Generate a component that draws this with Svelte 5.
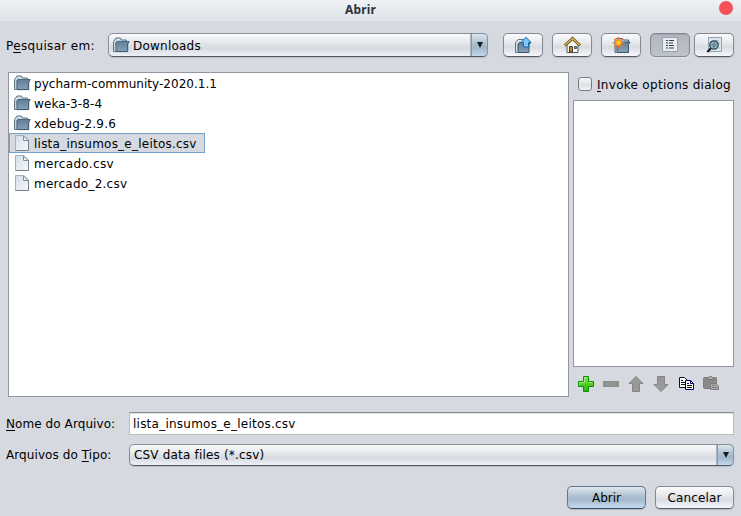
<script>
  const files = [
    { name: 'pycharm-community-2020.1.1', dir: true, spacing: 0.03 },
    { name: 'weka-3-8-4', dir: true, spacing: 0.1 },
    { name: 'xdebug-2.9.6', dir: true, spacing: 0.18 },
    { name: 'lista_insumos_e_leitos.csv', spacing: 0.235 },
    { name: 'mercado.csv', spacing: 0.34 },
    { name: 'mercado_2.csv', spacing: 0.25 }
  ];
  let selected = $state(3);
  let invoke = $state(false);
</script>

{#snippet folder()}
  <svg width="17" height="16" viewBox="0 0 17 16">
    <path d="M2.500 14.500h-2v-10l2.500-3.500h4.500l1 2h5v3" fill="#c3d1dc" stroke="#5d758a" />
    <path d="M1.500 5.500L4 2.500h3" fill="none" stroke="#e3ebf1" />
    <path d="M2.500 15V5.500L4 4h12.500l-1.500 2.500V15z" fill="url(#blue)" />
    <path d="M3 14V5.500L4.500 4.500h11.500" fill="none" stroke="#486379" stroke-width=".8" />
    <path d="M2.500 14.600h12.200V7l1.500-2.500" fill="none" stroke="#3b566c" />
  </svg>
{/snippet}

{#snippet page()}
  <svg width="17" height="16" viewBox="0 0 17 16">
    <path d="M1.500.5h8.500l4.500 4.500v10.500h-13z" fill="url(#paper)" stroke="#a7b1bb" />
    <path d="M1.500 15.500h13V5" fill="none" stroke="#77818b" />
    <path d="M9.500 1v4.500H14z" fill="#fff" stroke="#7891a9" />
  </svg>
{/snippet}

<svg class="defs" width="0" height="0">
  <defs>
    <linearGradient id="blue" x2="0" y2="1"><stop stop-color="#5f7d95" /><stop offset="1" stop-color="#87a2b8" /></linearGradient>
    <linearGradient id="paper" x2="1" y2="1"><stop stop-color="#d4dfe9" /><stop offset="1" stop-color="#f5f8fb" /></linearGradient>
    <linearGradient id="green" x2="0" y2="1"><stop stop-color="#8be04b" /><stop offset="1" stop-color="#20b600" /></linearGradient>
  </defs>
</svg>

<div class="dialog">
  <header><span>Abrir</span><i class="close"></i></header>

  <div class="top">
    <label class="look" for="look">P<u>e</u>squisar em:</label>
    <div class="combo" id="look">
      {@render folder()}<span class="value dl">Downloads</span><span class="arrow"></span>
    </div>
    <div class="tools">
      <button aria-label="Up">
        <svg width="18" height="18" viewBox="0 0 18 18">
          <path d="M3.500 16.500h-2V6.500l2.500-3h5.500v3" fill="#d3dfe8" stroke="#5d758a" />
          <path d="M4 16.500V8L5.500 6.500h11l-1.500 2.500v7.500z" fill="url(#blue)" stroke="#3b566c" />
          <path d="M12 1.200l5 5.300h-2.500V11h-5V6.500H7z" fill="#7fc6fa" stroke="#176dae" />
        </svg>
      </button>
      <button aria-label="Home">
        <svg width="18" height="18" viewBox="0 0 18 18">
          <path d="M4 8.500v8h11v-8L9.500 3.500z" fill="#f8f7f3" stroke="#57564f" />
          <path d="M1.800 9.500L9.500 2.500l7.500 7" fill="none" stroke="#594318" stroke-width="3" />
          <path d="M2 9.300L9.500 2.500l7.300 6.800" fill="none" stroke="#dfb64b" stroke-width="1.500" />
          <path d="M6.500 16v-5.500h3V16z" fill="#b68b42" stroke="#4e3b19" />
          <path d="M11.500 10.500h2v2h-2z" fill="#6b98bf" stroke="#31567a" />
        </svg>
      </button>
      <button aria-label="New folder">
        <svg width="19" height="18" viewBox="0 0 19 18">
          <path d="M4.500 16.500h-1.500v-12l1.500-2h6l1 1.500h5v4" fill="#c3d1dc" stroke="#486379" />
          <path d="M5 16.500v-9l1.500-1.500h11.500l-1.500 2.500v8z" fill="url(#blue)" stroke="#3b566c" />
          <path d="M6.500 1v11.500M.8 6.700h11.500M2.500 2.700l8 8M10.500 2.700l-8 8" stroke="#f9772a" stroke-width="1.400" />
          <circle cx="6.500" cy="6.700" r="3" fill="#ff9b20" />
          <circle cx="6.500" cy="6.700" r="1.900" fill="#ffd52c" />
        </svg>
      </button>
      <button class="pressed" aria-label="List">
        <svg width="16" height="16" viewBox="0 0 16 16">
          <path d="M.5.5h15v14h-15z" fill="#e7edf2" stroke="#8fa3b5" />
          <path d="M4 3.500h2M4 6h2M4 8.500h2M4 11h2M7 3.500h5M7 6h4M7 8.500h5M7 11h5" stroke="#3c4145" stroke-width="1.200" />
        </svg>
      </button>
      <button class="last" aria-label="Details">
        <svg width="18" height="17" viewBox="0 0 18 17">
          <path d="M3.500.5h13v14h-13z" fill="#dce7ef" stroke="#8fa3b5" />
          <path d="M10 3.500h4M13 6h2M13 11h2" stroke="#a7b9c8" />
          <circle cx="9" cy="8" r="4.200" fill="#9cb9ca" stroke="#32434f" stroke-width="1.300" />
          <path d="M6.500 7h5M6.500 9h5M9 5v6" stroke="#5f7f94" />
          <path d="M5.800 11.500l-3.500 3.500" stroke="#171717" stroke-width="2" />
        </svg>
      </button>
    </div>
  </div>

  <div class="main">
    <div class="files">
      {#each files as f, i}
        <div class="file" class:selected={selected === i} onclick={() => (selected = i)} role="presentation">
          {#if f.dir}{@render folder()}{:else}{@render page()}{/if}
          <span style:letter-spacing="{f.spacing}px">{f.name}</span>
        </div>
      {/each}
    </div>
    <aside>
      <label class="check"><input type="checkbox" bind:checked={invoke} /><span><u>I</u>nvoke options dialog</span></label>
      <div class="preview"></div>
      <div class="actions">
        <svg width="16" height="16" viewBox="0 0 16 16"><path d="M5.500.5h5v5h5v5h-5v5h-5v-5h-5v-5h5z" fill="url(#green)" stroke="#078f00" /><path d="M6.500 6.500v-5h3M1.500 9v-2.500h5M11 6.500h3.500" fill="none" stroke="#a5e978" /></svg>
        <svg width="16" height="16" viewBox="0 0 16 16"><path d="M.5 5.500h15v5H.5z" fill="#929292" stroke="#8b8b8b" /></svg>
        <svg width="16" height="16" viewBox="0 0 16 16"><path d="M8 .5L15 7.500h-3.500v8h-7v-8H1z" fill="#999" stroke="#858585" /></svg>
        <svg width="16" height="16" viewBox="0 0 16 16"><path d="M8 15.500L15 8.500h-3.500v-8h-7v8H1z" fill="#999" stroke="#858585" /></svg>
        <svg width="16" height="16" viewBox="0 0 16 16"><path d="M1.500 1.500h5l3 3v7h-8z" fill="#fff" stroke="#111" /><path d="M3 4.500h2M3 6.500h4M3 8.500h4" stroke="#111" /><path d="M7.500 4.500h5l3 3v6h-8z" fill="#fff" stroke="#00007b" /><path d="M12.500 4.500v3h3" fill="none" stroke="#00007b" /><path d="M9 7.500h2M9 9.500h5M9 11.500h5" stroke="#111" /></svg>
        <svg width="16" height="16" viewBox="0 0 16 16"><rect x=".5" y="1.500" width="13" height="11" rx="1" fill="#898989" stroke="#7e7e7e" /><path d="M4.500 3.500v-2h1l1-1h2l1 1h1v2z" fill="#aaa" stroke="#777" /><path d="M7.500 7.500h5l3 2.500v3.500h-8z" fill="#aaa" stroke="#7d7d7d" /><path d="M9 9.500h3M9 11.500h5" stroke="#808080" /></svg>
      </div>
    </aside>
  </div>

  <div class="row name"><label for="fname"><u>N</u>ome do Arquivo:</label><div class="field" id="fname">lista_insumos_e_leitos.csv</div></div>
  <div class="row type"><label for="ftype">Arquivos do <u>T</u>ipo:</label><div class="combo small" id="ftype"><span class="value">CSV data files (*.csv)</span><span class="arrow"></span></div></div>
  <footer><button class="primary">Abrir</button><button class="cancel">Cancelar</button></footer>
</div>

<style>
  :global(body) { margin: 0; }
  .defs { position: absolute; }
  .dialog { box-sizing: border-box; width: 741px; height: 516px; background: #d6d9e0; overflow: hidden; font: 12px/16px "DejaVu Sans", sans-serif; color: #000; display: flex; flex-direction: column; }
  .dialog * { box-sizing: border-box; }
  svg { display: block; flex: none; }
  u { text-decoration: underline; text-underline-offset: 2px; text-decoration-thickness: 1px; text-decoration-skip-ink: none; }
  header { height: 21px; flex: none; background: linear-gradient(#edf1f4, #dfe4eb); display: flex; justify-content: center; position: relative; color: #2d3237; font: bold 12px/19px "Noto Sans", sans-serif; padding-right: 20px; letter-spacing: .2px; }
  .close { position: absolute; right: 8px; top: 1px; width: 14px; height: 14px; border-radius: 50%; background: #f45057; }
  .top { display: flex; height: 24px; margin: 12px 7px 0 6px; flex: none; }
  .look { width: 102px; padding-top: 5px; letter-spacing: .34px; white-space: nowrap; }
  .combo { width: 380px; height: 24px; border: 1px solid #8b8f99; border-bottom-color: #555964; border-radius: 5px; background: linear-gradient(#fafafc, #e5e7ea 40%, #d6dae0 65%, #eef0f8); box-shadow: 0 1px 1px #b9bdc6; display: flex; align-items: center; padding-left: 4px; overflow: hidden; }
  .value { flex: 1; padding-left: 4px; letter-spacing: .18px; }
  .dl { padding: 1px 0 0 3px; letter-spacing: .22px; }
  .arrow { width: 17px; height: 24px; margin-right: -1px; flex: none; border: 1px solid #47637c; border-left-color: #8198ac; border-radius: 0 5px 5px 0; background: linear-gradient(#dbe5ec, #a6bbcb 50%, #a2b8cb 65%, #c2d8ec); display: flex; align-items: center; justify-content: center; box-shadow: -1px 0 1px #aab5c0; }
  .arrow::after { content: ""; border: 3.500px solid transparent; border-top: 6px solid #17191c; border-bottom: 0; }
  .tools { display: flex; gap: 9px; margin-left: 15px; }
  button { width: 40px; height: 24px; padding: 0; border: 1px solid #868a93; border-bottom-color: #555963; border-radius: 5px; background: linear-gradient(#fafafc, #e7e9ec 40%, #d8dce2 60%, #f6f7fd); box-shadow: 0 1px 1px #b5b9c2; color: #000; font: inherit; display: flex; align-items: center; justify-content: center; }
  .pressed { background: linear-gradient(#b4b6bf, #c0c2ca); border-color: #858891; box-shadow: inset 0 1px 1px #a3a6ae, 0 1px #e5e7ed; }
  .last { margin-left: -5px; }
  .main { display: flex; gap: 4px; margin: 15px 7px 0 8px; height: 325px; flex: none; }
  .files { width: 561px; border: 1px solid #9297a1; background: #fff; display: flex; flex-direction: column; align-items: flex-start; }
  .file { height: 20px; display: flex; align-items: center; padding: 0 7px 0 4px; border: 1px solid transparent; white-space: nowrap; }
  .file span { padding: 2px 0 0 3px; }
  .selected { background: #d6d9e0; border-color: #73a0cf; }
  aside { width: 161px; display: flex; flex-direction: column; }
  .check { display: flex; align-items: center; height: 24px; padding-left: 5px; gap: 5px; white-space: nowrap; letter-spacing: .29px; }
  .check span { padding-top: 1px; }
  .check input { appearance: none; width: 14px; height: 14px; border: 1px solid #777c86; border-radius: 3px; background: linear-gradient(#f9fafb, #dde0e5 60%, #f3f4fa); margin: 0; flex: none; }
  .preview { margin-top: 4px; height: 267px; border: 1px solid #9297a1; background: #fff; }
  .actions { display: flex; gap: 9px; padding: 9px 0 0 5px; }
  .row { display: flex; margin: 0 7px 0 6px; flex: none; align-items: center; }
  .row label { width: 123px; white-space: nowrap; letter-spacing: .08px; }
  .name { height: 23px; margin-top: 15px; }
  .field { flex: 1; height: 23px; background: #fff; border: 1px solid #b9bcc3; border-top-color: #888c95; box-shadow: inset 0 1px #e0e2e6; padding: 3px; letter-spacing: .235px; }
  .type { height: 22px; margin-top: 9px; }
  .small { flex: 1; height: 22px; padding-left: 0; }
  .small .arrow { height: 22px; }
  footer { display: flex; justify-content: flex-end; gap: 9px; margin: 20px 7px 0 0; }
  footer button { width: 79px; height: 23px; }
  footer .cancel { letter-spacing: .15px; }
  footer .primary { border-color: #61788e; border-bottom-color: #33485e; background: linear-gradient(#e0e8ee, #adc0ce 45%, #a4b9cb 60%, #c6dcf0); }
</style>
